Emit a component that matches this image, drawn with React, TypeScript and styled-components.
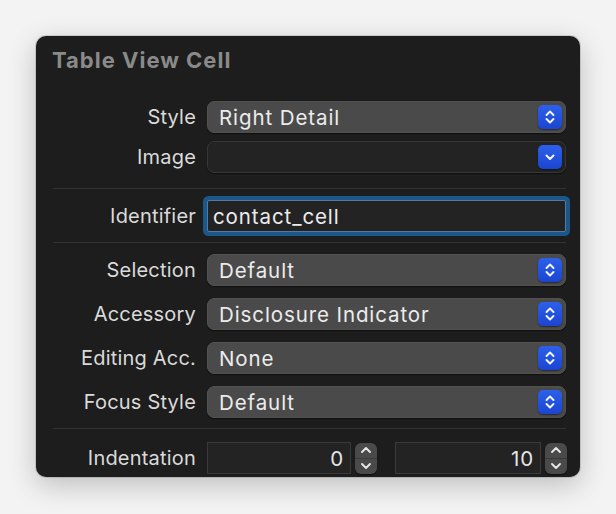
import React from "react";
import styled, { createGlobalStyle } from "styled-components";

const Global = createGlobalStyle`
  html, body { margin: 0; padding: 0; }
  body {
    background: #f3f3f3;
    width: 616px;
    height: 514px;
    overflow: hidden;
    font-family: Inter, "Noto Sans", sans-serif;
    -webkit-font-smoothing: antialiased;
  }
`;

const Stage = styled.div`
  padding: 36px 36px 0 36px;
  height: 514px;
  box-sizing: border-box;
`;

const Panel = styled.div`
  width: 544px;
  height: 441px;
  box-sizing: border-box;
  background: #1d1d1d;
  border-radius: 10px;
  box-shadow: 0 8px 28px rgba(0, 0, 0, 0.22), 0 0 0 1px rgba(0, 0, 0, 0.12);
  padding: 0 14px 0 17px;
  overflow: hidden;
  display: flex;
  flex-direction: column;
`;

const Title = styled.div`
  margin-top: 11px;
  margin-left: -1px;
  font-size: 22px;
  line-height: 26px;
  font-weight: 700;
  color: #8a8a8a;
  letter-spacing: 1px;
`;

const Section = styled.div<{ $pt: number; $pb: number; $gap: number }>`
  display: flex;
  flex-direction: column;
  gap: ${(p) => p.$gap}px;
  padding-top: ${(p) => p.$pt}px;
  padding-bottom: ${(p) => p.$pb}px;
`;

const Separator = styled.div`
  height: 1px;
  background: #333333;
`;

const Row = styled.div`
  display: grid;
  grid-template-columns: 143px 1fr;
  column-gap: 11px;
  align-items: center;
  height: 32px;
`;

const Label = styled.div`
  text-align: right;
  font-size: 20px;
  letter-spacing: 0.2px;
  color: #dadada;
  white-space: nowrap;
`;

const Popup = styled.div<{ $empty?: boolean }>`
  position: relative;
  height: 32px;
  box-sizing: border-box;
  border-radius: 7px;
  background: ${(p) => (p.$empty ? "#232323" : "#4a4a4a")};
  border: 1px solid ${(p) => (p.$empty ? "#383838" : "#525252")};
  box-shadow: 0 0.5px 1px rgba(0, 0, 0, 0.5);
  display: flex;
  align-items: center;
  padding: 0 3px 0 11px;
  color: #ececec;
  font-size: 20.5px;
  letter-spacing: 0.9px;
`;

const PopupText = styled.span`
  flex: 1;
  white-space: nowrap;
`;

const BlueButton = styled.div`
  width: 24px;
  height: 24px;
  border-radius: 5px;
  background: linear-gradient(#2d60ea, #1b45d0);
  box-shadow: 0 1px 1.5px rgba(0, 0, 0, 0.45);
  display: flex;
  align-items: center;
  justify-content: center;
`;

const FocusWrap = styled.div`
  height: 32px;
  box-sizing: border-box;
  border: 1px solid #4f7ca5;
  border-radius: 2px;
  background: #232323;
  box-shadow: 0 0 0 4px #1b5788;
  display: flex;
  align-items: center;
  padding: 0 5px;
  color: #ececec;
  font-size: 20.5px;
  letter-spacing: 0.9px;
`;

const StepperPair = styled.div`
  display: flex;
  align-items: center;
  gap: 18px;
`;

const Group = styled.div`
  display: flex;
  align-items: center;
  gap: 4px;
`;

const NumField = styled.div<{ $w: number }>`
  width: ${(p) => p.$w}px;
  height: 32px;
  box-sizing: border-box;
  background: #232323;
  border: 1px solid #3a3a3a;
  display: flex;
  align-items: center;
  justify-content: flex-end;
  padding: 0 6px;
  color: #e6e6e6;
  font-size: 20.5px;
  letter-spacing: 0.9px;
`;

const Stepper = styled.div`
  width: 22px;
  height: 31px;
  border-radius: 6px;
  background: #4a4a4a;
  box-shadow: 0 0.5px 1px rgba(0, 0, 0, 0.5);
  display: flex;
  flex-direction: column;
  overflow: hidden;
`;

const StepHalf = styled.div<{ $top?: boolean }>`
  flex: 1;
  display: flex;
  align-items: center;
  justify-content: center;
  border-bottom: ${(p) => (p.$top ? "1px solid #3a3a3a" : "none")};
`;

const UpDown = () => (
  <svg width="12" height="16" viewBox="0 0 12 16" fill="none">
    <path d="M2.5 6 L6 2.5 L9.5 6" stroke="#f2f4ff" strokeWidth="1.9" strokeLinecap="round" strokeLinejoin="round" />
    <path d="M2.5 10 L6 13.5 L9.5 10" stroke="#f2f4ff" strokeWidth="1.9" strokeLinecap="round" strokeLinejoin="round" />
  </svg>
);

const Down = () => (
  <svg width="12" height="10" viewBox="0 0 12 10" fill="none">
    <path d="M2.5 3.5 L6 7 L9.5 3.5" stroke="#f2f4ff" strokeWidth="2" strokeLinecap="round" strokeLinejoin="round" />
  </svg>
);

const Chev = ({ up }: { up?: boolean }) => (
  <svg width="12" height="8" viewBox="0 0 12 8" fill="none">
    <path
      d={up ? "M2 6 L6 2 L10 6" : "M2 2 L6 6 L10 2"}
      stroke="#e8e8e8"
      strokeWidth="1.9"
      strokeLinecap="round"
      strokeLinejoin="round"
    />
  </svg>
);

const PopupRow = ({ label, value, empty }: { label: string; value?: string; empty?: boolean }) => (
  <Row>
    <Label>{label}</Label>
    <Popup $empty={empty}>
      <PopupText>{value}</PopupText>
      <BlueButton>{empty ? <Down /> : <UpDown />}</BlueButton>
    </Popup>
  </Row>
);

const StepperControl = () => (
  <Stepper>
    <StepHalf $top>
      <Chev up />
    </StepHalf>
    <StepHalf>
      <Chev />
    </StepHalf>
  </Stepper>
);

export default function App() {
  return (
    <>
      <Global />
      <Stage>
        <Panel>
          <Title>Table View Cell</Title>
          <Section $pt={28} $pb={15} $gap={8}>
            <PopupRow label="Style" value="Right Detail" />
            <PopupRow label="Image" empty />
          </Section>
          <Separator />
          <Section $pt={11} $pb={10} $gap={0}>
            <Row>
              <Label>Identifier</Label>
              <FocusWrap>contact_cell</FocusWrap>
            </Row>
          </Section>
          <Separator />
          <Section $pt={11} $pb={10} $gap={12}>
            <PopupRow label="Selection" value="Default" />
            <PopupRow label="Accessory" value="Disclosure Indicator" />
            <PopupRow label="Editing Acc." value="None" />
            <PopupRow label="Focus Style" value="Default" />
          </Section>
          <Separator />
          <Section $pt={13} $pb={0} $gap={0}>
            <Row>
              <Label>Indentation</Label>
              <StepperPair>
                <Group>
                  <NumField $w={144}>0</NumField>
                  <StepperControl />
                </Group>
                <Group>
                  <NumField $w={146}>10</NumField>
                  <StepperControl />
                </Group>
              </StepperPair>
            </Row>
          </Section>
        </Panel>
      </Stage>
    </>
  );
}
